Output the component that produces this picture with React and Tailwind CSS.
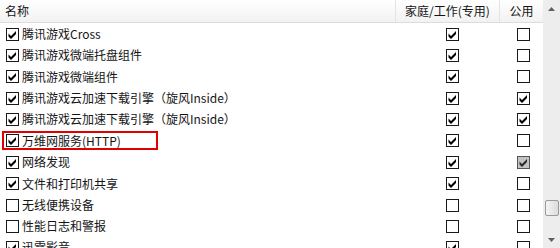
import React from "react"

const rows = [
  { name: "腾讯游戏Cross", on: 1, home: 1, pub: 0, h: "h-[21px]" },
  { name: "腾讯游戏微端托盘组件", on: 1, home: 1, pub: 0, h: "h-[21px]" },
  { name: "腾讯游戏微端组件", on: 1, home: 1, pub: 0, h: "h-[22px]" },
  { name: "腾讯游戏云加速下载引擎（旋风Inside）", on: 1, home: 1, pub: 1, h: "h-[21px]" },
  { name: "腾讯游戏云加速下载引擎（旋风Inside）", on: 1, home: 1, pub: 1, h: "h-[21px]" },
  { name: "万维网服务(HTTP)", on: 1, home: 1, pub: 0, h: "h-[22px]", mark: true },
  { name: "网络发现", on: 1, home: 1, pub: 2, h: "h-[21px]" },
  { name: "文件和打印机共享", on: 1, home: 1, pub: 0, h: "h-[22px]" },
  { name: "无线便携设备", on: 0, home: 0, pub: 0, h: "h-[21px]" },
  { name: "性能日志和警报", on: 0, home: 0, pub: 0, h: "h-[21px]" },
  { name: "迅雷影音", on: 1, home: 1, pub: 0, h: "h-[21px]" },
]

function Box({ state }) {
  // state: 0 empty, 1 checked, 2 disabled checked
  const fill = state === 2 ? "#c4c4c4" : "#ffffff"
  const stroke = state === 2 ? "#555555" : "#1a1a1a"
  return (
    <svg width="13" height="13" viewBox="0 0 13 13" className="shrink-0">
      <rect x="0.5" y="0.5" width="12" height="12" fill={fill} stroke={stroke} />
      {state > 0 && (
        <path d="M2.5 5.5 L5 8 L10 3 L10 6 L5 11 L2.5 8.5 Z" fill={state === 2 ? "#2a2a2a" : "#000"} />
      )}
    </svg>
  )
}

export default function App() {
  return (
    <div className="w-[560px] h-[248px] overflow-hidden bg-white flex text-[12px] text-[#141414]" style={{ fontFamily: '"Noto Sans CJK SC", "Noto Sans", sans-serif' }}>
      <div className="w-[543px] flex flex-col">
        <div className="h-[23px] shrink-0 flex border-b border-[#dcdcdc] bg-gradient-to-b from-white to-[#f2f2f2]">
          <div className="w-[396px] pl-[5px] flex items-center border-r border-[#e4e4e4]">名称</div>
          <div className="w-[104px] flex items-center justify-center border-r border-[#e4e4e4]">家庭/工作(专用)</div>
          <div className="flex-1 flex items-center justify-center">公用</div>
        </div>
        {rows.map((r, i) => (
          <div key={i} className={"shrink-0 flex items-center pt-px " + r.h}>
            <div className="w-[396px] h-full flex items-center pl-[6px]">
              <div className={r.mark ? "flex items-center gap-[3px] h-[19px] w-[156px] -ml-[4px] pl-[2px] border-2 border-[#e10000]" : "flex items-center gap-[3px]"}>
                <Box state={r.on} />
                <span className="leading-none">{r.name}</span>
              </div>
            </div>
            <div className="w-[104px] flex justify-center pl-[8px]">
              <Box state={r.home} />
            </div>
            <div className="flex-1 flex justify-center pl-[3px]">
              <Box state={r.pub} />
            </div>
          </div>
        ))}
      </div>
      <div className="w-[17px] bg-[#ededed] flex flex-col items-center">
        <div className="h-[17px] flex items-center justify-center">
          <svg width="7" height="4" viewBox="0 0 7 4"><path d="M0 4 L3.5 0 L7 4 Z" fill="#606060" /></svg>
        </div>
        <div className="flex-1" />
        <div className="w-[14px] h-[16px] mb-[15px] border border-[#9a9a9a] rounded-[2px] bg-gradient-to-r from-[#f4f4f4] to-[#dcdcdc]" />
        <div className="h-[17px] flex items-center justify-center">
          <svg width="7" height="4" viewBox="0 0 7 4"><path d="M0 0 L3.5 4 L7 0 Z" fill="#606060" /></svg>
        </div>
      </div>
    </div>
  )
}
